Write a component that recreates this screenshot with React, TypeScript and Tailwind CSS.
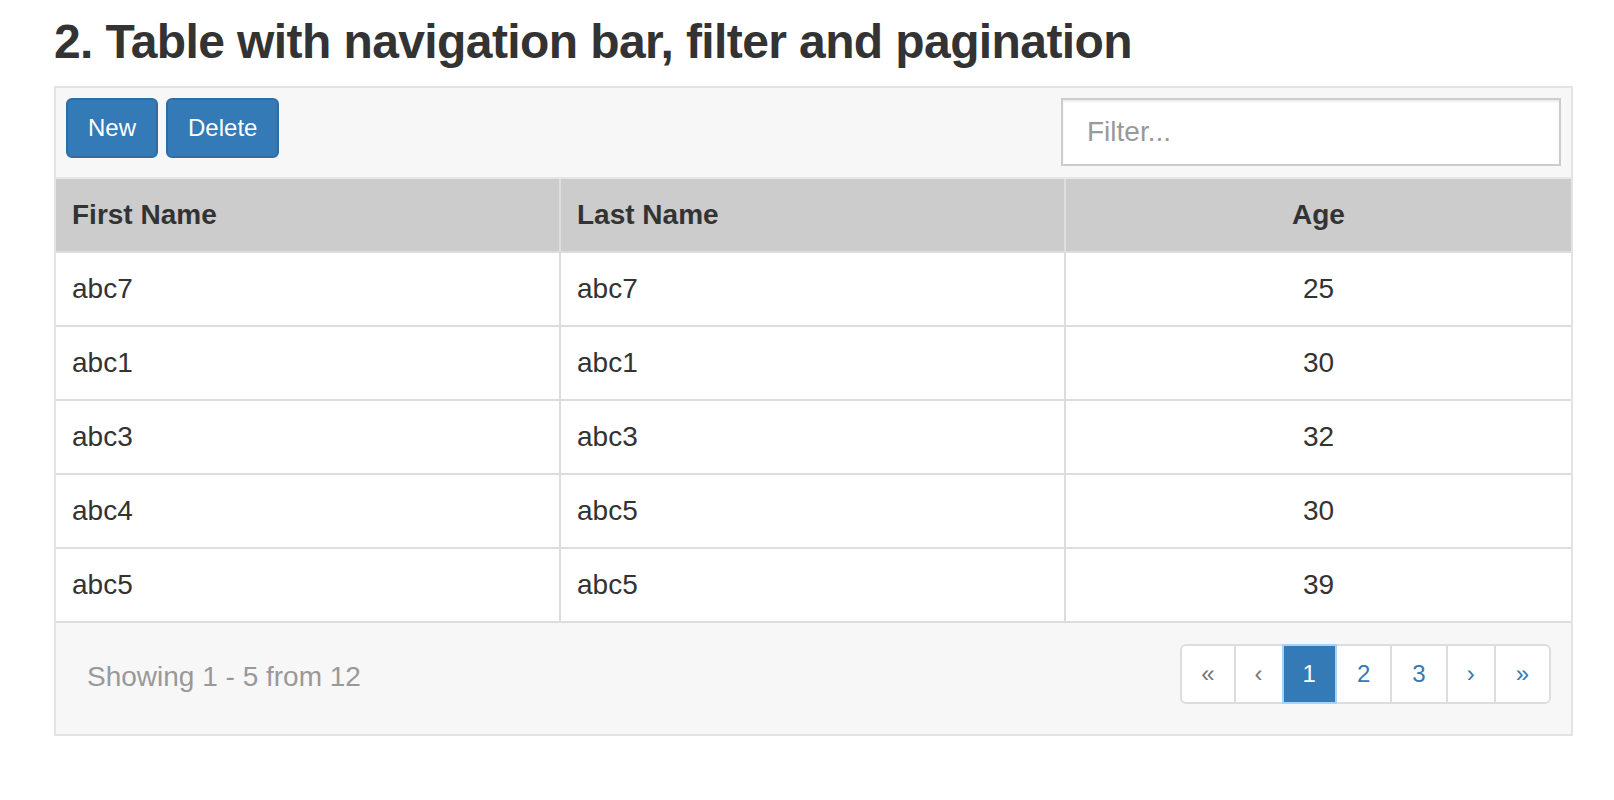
import React from "react";

const rows = [
  ["abc7", "abc7", "25"],
  ["abc1", "abc1", "30"],
  ["abc3", "abc3", "32"],
  ["abc4", "abc5", "30"],
  ["abc5", "abc5", "39"],
];

export default function App() {
  return (
    <div
      className="bg-white min-h-[800px] pt-[16px] pl-[54px] text-[#333]"
      style={{ fontFamily: '"Liberation Sans", Arial, Helvetica, sans-serif' }}
    >
      <h2 className="text-[48px] font-bold leading-[1.1] mb-[17px] tracking-[-0.6px]">
        2. Table with navigation bar, filter and pagination
      </h2>
      <div className="w-[1519px] border-2 border-[#e3e3e3]">
        {/* toolbar */}
        <div className="flex items-start justify-between bg-[#f7f7f7] pt-[10px] px-[10px] pb-[11px] border-b-2 border-[#e6e6e6]">
          <div className="flex gap-[8px]">
            <button className="h-[60px] px-[20px] rounded-[6px] border-2 border-[#2e6da4] bg-[#337ab7] text-white text-[24px] leading-[1.5]">
              New
            </button>
            <button className="h-[60px] px-[20px] rounded-[6px] border-2 border-[#2e6da4] bg-[#337ab7] text-white text-[24px] leading-[1.5]">
              Delete
            </button>
          </div>
          <input
            placeholder="Filter..."
            className="w-[500px] h-[68px] border-2 border-[#ccc] bg-white px-[24px] text-[28px] text-[#555] placeholder:text-[#999] outline-none shadow-[inset_0_2px_2px_rgba(0,0,0,0.075)]"
          />
        </div>
        {/* header */}
        <div className="grid grid-cols-3 bg-[#cccccc] border-b-2 border-[#dddddd] text-[28px] font-bold leading-[40px]">
          <div className="px-[16px] py-[16px] border-r-2 border-[#dedede]">First Name</div>
          <div className="px-[16px] py-[16px] border-r-2 border-[#dedede]">Last Name</div>
          <div className="px-[16px] py-[16px] text-center">Age</div>
        </div>
        {rows.map((r, i) => (
          <div
            key={i}
            className="grid grid-cols-3 bg-white border-b-2 border-[#dddddd] text-[28px] leading-[40px]"
          >
            <div className="px-[16px] py-[16px] border-r-2 border-[#dddddd]">{r[0]}</div>
            <div className="px-[16px] py-[16px] border-r-2 border-[#dddddd]">{r[1]}</div>
            <div className="px-[16px] py-[16px] text-center">{r[2]}</div>
          </div>
        ))}
        {/* footer */}
        <div className="flex items-center justify-between bg-[#f7f7f7] pl-[31px] pr-[20px] pt-[21px] pb-[30px]">
          <span className="text-[28px] text-[#999] leading-[40px] pt-[6px]">Showing 1 - 5 from 12</span>
          <div className="flex text-[24px] leading-[36px]">
            <span className="relative px-[19px] py-[10px] bg-white border-2 border-[#ddd] rounded-l-[6px] text-[#777]">«</span>
            <span className="relative -ml-[2px] px-[19px] py-[10px] bg-white border-2 border-[#ddd] text-[#777]">‹</span>
            <span className="relative z-10 -ml-[2px] px-[19px] py-[10px] bg-[#337ab7] border-2 border-[#a9d3f6] text-white">1</span>
            <span className="relative -ml-[2px] px-[20px] py-[10px] bg-white border-2 border-[#ddd] text-[#337ab7]">2</span>
            <span className="relative -ml-[2px] px-[20px] py-[10px] bg-white border-2 border-[#ddd] text-[#337ab7]">3</span>
            <span className="relative -ml-[2px] px-[19px] py-[10px] bg-white border-2 border-[#ddd] text-[#337ab7]">›</span>
            <span className="relative -ml-[2px] px-[20px] py-[10px] bg-white border-2 border-[#ddd] rounded-r-[6px] text-[#337ab7]">»</span>
          </div>
        </div>
      </div>
    </div>
  );
}
